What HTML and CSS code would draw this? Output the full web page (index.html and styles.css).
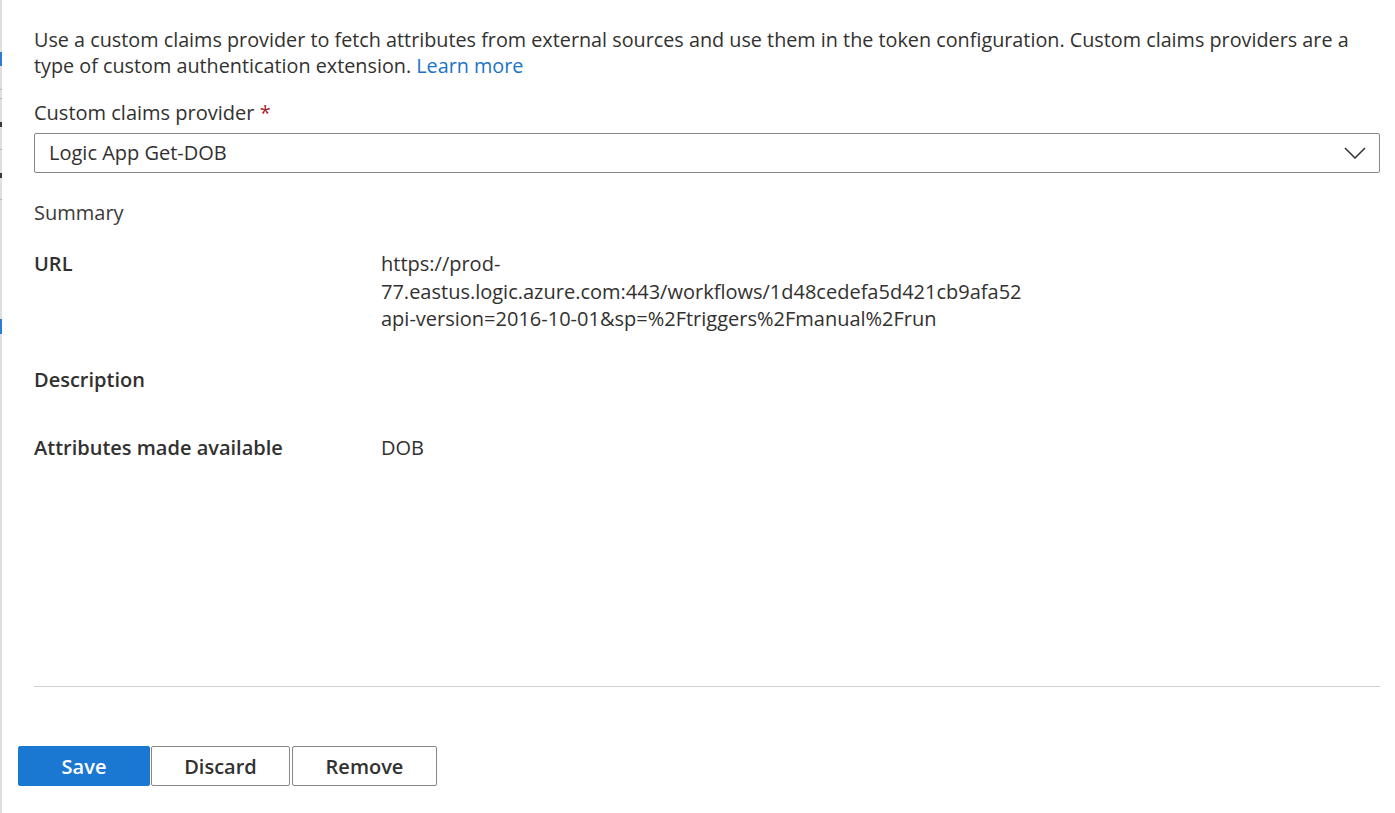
FILE: index.html
```html
<!DOCTYPE html>
<html lang="en">
<head>
<meta charset="utf-8">
<title>Custom claims provider</title>
<link rel="stylesheet" href="styles.css">
</head>
<body>
<div class="layout">
  <div class="rail">
    <span class="mark blue m1"></span>
    <span class="mark gray m2"></span>
    <span class="mark gray m3"></span>
    <span class="mark dark m4"></span>
    <span class="mark gray m5"></span>
    <span class="mark dark m6"></span>
    <span class="mark gray m7"></span>
    <span class="mark blue m8"></span>
  </div>
  <div class="panel">
    <div class="content">
      <p class="intro">Use a custom claims provider to fetch attributes from external sources and use them in the token configuration. Custom claims providers are a type of custom authentication extension. <a class="link" href="#">Learn more</a></p>
      <label class="field-label">Custom claims provider <span class="req">*</span></label>
      <div class="dropdown">
        <span class="dropdown-text">Logic App Get-DOB</span>
        <svg class="chevron" width="22" height="12" viewBox="0 0 22 12"><path d="M1 1 L11 11 L21 1" fill="none" stroke="#323130" stroke-width="1.5"/></svg>
      </div>
      <div class="summary-title">Summary</div>
      <div class="summary">
        <div class="key">URL</div>
        <div class="value">https://prod-<br>77.eastus.logic.azure.com:443/workflows/1d48cedefa5d421cb9afa52<br>api-version=2016-10-01&amp;sp=%2Ftriggers%2Fmanual%2Frun</div>
        <div class="key">Description</div>
        <div class="value empty"></div>
        <div class="key">Attributes made available</div>
        <div class="value">DOB</div>
      </div>
    </div>
    <div class="divider"></div>
    <div class="footer">
      <button class="btn primary">Save</button>
      <button class="btn discard">Discard</button>
      <button class="btn remove">Remove</button>
    </div>
  </div>
</div>
</body>
</html>
```

FILE: styles.css
```css
html, body {
  margin: 0;
  padding: 0;
  background: #ffffff;
}
body {
  font-family: "Open Sans", "Liberation Sans", sans-serif;
  font-size: 20px;
  color: #323130;
}
.layout {
  display: flex;
  height: 813px;
  overflow: hidden;
}
.rail {
  width: 2px;
  flex: 0 0 2px;
  background: #e1dfdd;
  display: flex;
  flex-direction: column;
}
.mark {
  display: block;
  width: 2px;
  flex: 0 0 auto;
}
.mark.blue { background: #2b7cd3; }
.mark.gray { background: #b9b7b5; }
.mark.dark { background: #3b3a39; }
.m1 { margin-top: 52px; height: 14px; }
.m2 { margin-top: 23px; height: 1px; }
.m3 { margin-top: 8px; height: 1px; }
.m4 { margin-top: 23px; height: 5px; }
.m5 { margin-top: 22px; height: 1px; }
.m6 { margin-top: 23px; height: 5px; }
.m7 { margin-top: 21px; height: 1px; }
.m8 { margin-top: 119px; height: 15px; }

.panel {
  flex: 1;
  display: flex;
  flex-direction: column;
  min-width: 0;
}
.content {
  flex: 1;
  padding: 27px 15px 0 32px;
}
.intro {
  margin: 0;
  font-size: 19.8px;
  line-height: 26px;
}
.link {
  color: #1a73c9;
  text-decoration: none;
}
.field-label {
  display: block;
  margin-top: 21px;
  line-height: 26px;
}
.req {
  color: #a4262c;
}
.dropdown {
  margin-top: 7px;
  height: 40px;
  box-sizing: border-box;
  border: 1px solid #8a8886;
  border-radius: 2px;
  display: flex;
  align-items: center;
  justify-content: space-between;
  padding: 0 13px 0 14px;
}
.dropdown-text {
  line-height: 26px;
}
.chevron {
  display: block;
}
.summary-title {
  margin-top: 27px;
  line-height: 26px;
  color: #3b3a39;
}
.summary {
  margin-top: 24px;
  display: grid;
  grid-template-columns: 347px 1fr;
  row-gap: 33px;
  line-height: 27.5px;
}
.key {
  font-weight: 600;
}
.value.empty {
  min-height: 35px;
}
.divider {
  height: 1px;
  background: #d2d0ce;
  margin: 0 15px 0 32px;
}
.footer {
  display: flex;
  gap: 1px;
  padding: 59px 0 27px 16px;
}
.btn {
  height: 40px;
  box-sizing: border-box;
  border: 1px solid #8a8886;
  border-radius: 2px;
  background: #ffffff;
  color: #323130;
  font-family: inherit;
  font-size: 20px;
  font-weight: 600;
  padding: 0;
}
.btn.primary {
  background: #1b78d2;
  border-color: #1b78d2;
  color: #ffffff;
  width: 132px;
}
.btn.discard {
  width: 139px;
}
.btn.remove {
  width: 145px;
  margin-left: 1px;
}
```
